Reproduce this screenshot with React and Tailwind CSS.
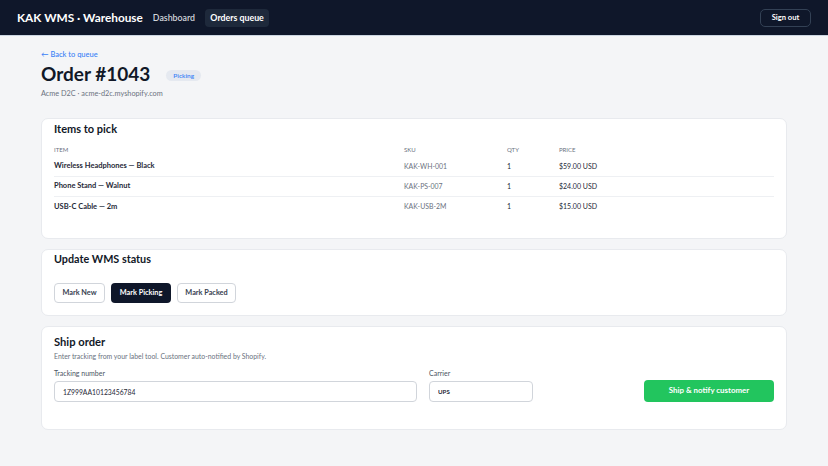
const items = [
    { name: "Wireless Headphones — Black", sku: "KAK-WH-001", qty: 1, price: "$59.00 USD" },
    { name: "Phone Stand — Walnut", sku: "KAK-PS-007", qty: 1, price: "$24.00 USD" },
    { name: "USB-C Cable — 2m", sku: "KAK-USB-2M", qty: 1, price: "$15.00 USD" }
]

function Card({ children, className = "" }) {
    return (
        <div className={"bg-white border border-[#e8eaee] rounded-[7px] px-[12px] " + className}>
            {children}
        </div>
    )
}

export default function App() {
    return (
        <div className="min-h-[466px] bg-[#f4f5f7] text-[#111827]" style={{ fontFamily: 'Lato, "Noto Sans", sans-serif' }}>
            <header className="h-[36px] bg-[#0f172a] border-b border-[#cbd5e1] flex items-center px-[17px]">
                <div className="text-white font-bold text-[11.8px]">KAK WMS · Warehouse</div>
                <nav className="flex items-center ml-[10px]">
                    <span className="text-[#d1d5db] text-[8.8px] font-semibold">Dashboard</span>
                    <span className="text-white text-[8.8px] font-bold bg-[#1e293b] rounded-[4px] h-[18px] w-[64px] flex items-center justify-center ml-[10px]">Orders queue</span>
                </nav>
                <button className="ml-auto text-white text-[7.6px] font-bold border border-[#334155] rounded-[5px] h-[18px] w-[51px] flex items-center justify-center">Sign out</button>
            </header>

            <main className="max-w-[746px] mx-auto pt-[13px]">
                <div className="text-[#3b82f6] text-[7.5px] font-medium leading-[12px]">← Back to queue</div>
                <div className="flex items-center mt-[1px]">
                    <h1 className="text-[19px] font-bold text-[#111827] leading-[24px]">Order #1043</h1>
                    <span className="ml-[16px] bg-[#e5e9f0] text-[#3b82f6] text-[6.5px] font-semibold rounded-full px-[7px] leading-[11px] mt-[3px]">Picking</span>
                </div>
                <div className="text-[#6b7280] text-[7.3px] leading-[12px] mt-[2px]">Acme D2C · acme-d2c.myshopify.com</div>

                <Card className="mt-[18px] pt-[2px] pb-[22px]">
                    <h2 className="text-[11px] font-bold leading-[16px]">Items to pick</h2>
                    <table className="w-full mt-[8px] text-left">
                        <thead>
                            <tr className="text-[#6b7280] text-[6px] uppercase">
                                <th className="font-normal pb-[2px] w-[350px]">Item</th>
                                <th className="font-normal pb-[2px] w-[103px]">SKU</th>
                                <th className="font-normal pb-[2px] w-[52px]">Qty</th>
                                <th className="font-normal pb-[2px]">Price</th>
                            </tr>
                        </thead>
                        <tbody>
                            {items.map((it, i) => (
                                <tr key={it.sku} className={i < items.length - 1 ? "border-b border-[#eef0f3]" : ""}>
                                    <td className="text-[7.5px] font-bold text-[#1f2937] h-[20px]">{it.name}</td>
                                    <td className="text-[6.9px] text-[#6b7280]">{it.sku}</td>
                                    <td className="text-[7px] text-[#1f2937]">{it.qty}</td>
                                    <td className="text-[7px] text-[#1f2937]">{it.price}</td>
                                </tr>
                            ))}
                        </tbody>
                    </table>
                </Card>

                <Card className="mt-[10px] pt-[1px] pb-[12px]">
                    <h2 className="text-[10.8px] font-bold leading-[16px]">Update WMS status</h2>
                    <div className="flex gap-[6px] mt-[16px]">
                        <button className="h-[20px] w-[51px] whitespace-nowrap rounded-[4px] border border-[#d1d5db] text-[7.3px] font-bold text-[#374151] bg-white">Mark New</button>
                        <button className="h-[20px] w-[60px] whitespace-nowrap rounded-[4px] bg-[#0f172a] text-[7.3px] font-bold text-white">Mark Picking</button>
                        <button className="h-[20px] w-[59px] whitespace-nowrap rounded-[4px] border border-[#d1d5db] text-[7.3px] font-bold text-[#374151] bg-white">Mark Packed</button>
                    </div>
                </Card>

                <Card className="mt-[10px] pt-[7px] pb-[27px]">
                    <h2 className="text-[11.2px] font-bold leading-[16px]">Ship order</h2>
                    <p className="text-[6.9px] text-[#6b7280] leading-[10px] mt-[1px]">Enter tracking from your label tool. Customer auto-notified by Shopify.</p>
                    <div className="flex items-end mt-[7px]">
                        <label className="flex flex-col w-[363px]">
                            <span className="text-[7px] text-[#4b5563] leading-[10px] mb-[3px]">Tracking number</span>
                            <input readOnly value="1Z999AA10123456784" className="h-[21px] rounded-[4px] border border-[#d1d5db] px-[8px] text-[6.8px] text-[#1f2937] outline-none" />
                        </label>
                        <label className="flex flex-col w-[104px] ml-[12px]">
                            <span className="text-[7px] text-[#4b5563] leading-[10px] mb-[3px]">Carrier</span>
                            <input readOnly value="UPS" className="h-[21px] rounded-[4px] border border-[#d1d5db] px-[8px] text-[6.2px] font-bold text-[#1f2937] outline-none" />
                        </label>
                        <button className="ml-auto h-[22px] w-[130px] rounded-[4px] bg-[#22c55e] text-white text-[7.9px] font-bold">Ship &amp; notify customer</button>
                    </div>
                </Card>
            </main>
        </div>
    )
}
